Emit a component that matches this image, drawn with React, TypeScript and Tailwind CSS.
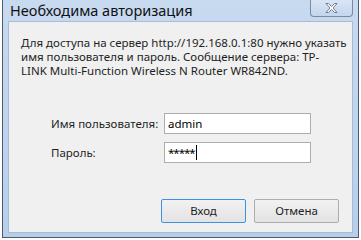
import React from 'react';

const font = { fontFamily: '"Noto Sans", "Open Sans", sans-serif' };

const Field: React.FC<{ label: string; value: string; caret?: boolean }> = ({ label, value, caret }) => (
  <div className="flex items-center">
    <span className="w-[113px] text-[11.5px] text-[#1e1e1e]">{label}</span>
    <div className="flex h-[21px] w-[147px] items-center border border-[#abadb3] bg-white px-[3px] text-[11.5px] text-black">
      <span className={caret ? 'tracking-[-1px]' : ''}>{value}</span>
      {caret && <span className="ml-[1px] h-[15px] w-[1px] bg-black" />}
    </div>
  </div>
);

const App: React.FC = () => {
  return (
    <div className="h-[240px] w-[361px] overflow-hidden bg-white" style={font}>
      <div className="relative ml-[2px] flex h-[238px] w-[357px] flex-col border-x border-b border-[#52596a] bg-gradient-to-b from-[#c7daf0] to-[#b7cfec]">
        <div className="flex h-[21px] items-center pl-[7px] text-[14.5px] leading-none text-[#111]">
          Необходима авторизация
        </div>
        <button className="absolute right-[5px] top-0 flex h-[17px] w-[43px] items-center justify-center rounded-b-[4px] border border-t-0 border-[#7d8a9c] bg-gradient-to-b from-[#d8e5f4] to-[#c3d6ee]">
          <svg width="13" height="10" viewBox="0 0 13 10">
            <path d="M1 0.5 L3.5 0.5 L6.5 3.5 L9.5 0.5 L12 0.5 L8 5 L12 9.5 L9.5 9.5 L6.5 6.5 L3.5 9.5 L1 9.5 L5 5 Z" fill="white" stroke="#6d7a8d" strokeWidth="1" />
          </svg>
        </button>
        <div className="mx-[5px] flex flex-1 flex-col border border-[#a6bcd6] bg-[#f0f0f0]">
          <p className="ml-[12px] mt-[14px] whitespace-nowrap text-[11.5px] leading-[14px] text-[#1e1e1e]">
            Для доступа на сервер http://192.168.0.1:80 нужно указать
            <br />
            имя пользователя и пароль. Сообщение сервера: TP-
            <br />
            LINK Multi-Function Wireless N Router WR842ND.
          </p>
          <div className="ml-[42px] mt-[35px] flex flex-col gap-[8px]">
            <Field label="Имя пользователя:" value="admin" />
            <Field label="Пароль:" value="*****" caret />
          </div>
          <div className="ml-auto mr-[13px] mt-auto mb-[9px] flex gap-[8px]">
            <button className="h-[24px] w-[85px] rounded-[2px] border border-[#3c91e6] bg-gradient-to-b from-[#f2f2f2] to-[#e3e3e3] text-[11.5px] text-[#1e1e1e]">
              Вход
            </button>
            <button className="h-[24px] w-[85px] rounded-[2px] border border-[#adadad] bg-gradient-to-b from-[#f2f2f2] to-[#e3e3e3] text-[11.5px] text-[#1e1e1e]">
              Отмена
            </button>
          </div>
        </div>
        <div className="h-[4px]" />
      </div>
    </div>
  );
};

export default App;
